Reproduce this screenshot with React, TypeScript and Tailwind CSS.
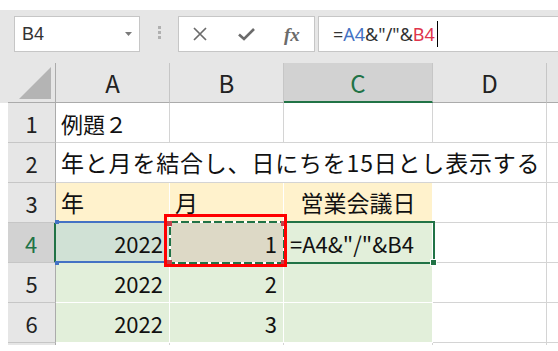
import React from "react";

const gray = "border-r border-b border-[#d4d4d4]";
const wht = "border-r border-b border-white";

function RowHead({ n, sel }: { n?: number; sel?: boolean }) {
  return (
    <div
      className={
        "w-[48px] shrink-0 h-full flex items-center justify-center text-[22px] leading-none border-b border-b-[#c6c6c6] " +
        (sel
          ? "bg-[#d2d2d2] text-[#217346] border-r-2 border-r-[#217346]"
          : "bg-[#e6e6e6] text-[#222] border-r border-r-[#ababab]")
      }
    >
      {n !== undefined && <span className="pt-[1px]">{n}</span>}
    </div>
  );
}

function Row({ children }: { children: React.ReactNode }) {
  return (
    <div className="flex h-[40px]">
      <div className="w-[8px] shrink-0 bg-white" />
      {children}
    </div>
  );
}

export default function App() {
  return (
    <div className="w-[558px] h-[351px] bg-white overflow-hidden font-['Noto_Sans_CJK_JP','Noto_Sans',sans-serif] text-[#111]">
      <div className="h-[10px]" />
      {/* formula bar */}
      <div className="h-[53px] bg-[#e6e6e6] flex items-start pt-[6px]">
        <div className="ml-[14px] w-[126px] h-[36px] shrink-0 bg-white border border-[#c6c6c6] flex items-center justify-between pl-[7px] pr-[7px]">
          <span className="font-['Liberation_Sans',sans-serif] text-[18px] text-[#333] leading-none">B4</span>
          <svg width="7" height="4" viewBox="0 0 7 4">
            <path d="M0 0 L7 0 L3.5 4 Z" fill="#7a7a7a" />
          </svg>
        </div>
        <div className="w-[38px] shrink-0 flex justify-center pt-[10px]">
          <div className="flex flex-col gap-[2px]">
            <div className="w-[3px] h-[3px] bg-[#b0b0b0]" />
            <div className="w-[3px] h-[3px] bg-[#b0b0b0]" />
            <div className="w-[3px] h-[3px] bg-[#b0b0b0]" />
          </div>
        </div>
        <div className="w-[137px] h-[36px] shrink-0 bg-white border border-[#c6c6c6] flex items-center pl-[14px]">
          <svg width="14" height="14" viewBox="0 0 14 14">
            <path d="M1 1 L13 13 M13 1 L1 13" stroke="#6b6b6b" strokeWidth="1.7" />
          </svg>
          <svg className="ml-[31px]" width="17" height="14" viewBox="0 0 17 14">
            <path d="M1 7.5 L6 12 L16 2" stroke="#6b6b6b" strokeWidth="2.6" fill="none" />
          </svg>
          <span className="ml-[29px] font-['Liberation_Serif',serif] italic font-bold text-[19px] leading-none text-[#6b6b6b]">
            fx
          </span>
        </div>
        <div className="ml-[3px] flex-1 h-[36px] bg-white border border-[#c6c6c6] border-r-0 flex items-center pl-[14px]">
          <span className="font-['Noto_Sans',sans-serif] text-[18px] leading-none text-[#333]">
            =<span className="text-[#4472c4]">A4</span>&amp;"/"&amp;<span className="text-[#e0344c]">B4</span>
          </span>
          <div className="ml-[2px] w-[1px] h-[26px] bg-black" />
        </div>
      </div>

      {/* sheet */}
      <div className="relative h-[282px] overflow-hidden">
        {/* column headers */}
        <div className="flex h-[40px] bg-[#e6e6e6] text-[24px] leading-none text-[#222]">
          <div className="w-[8px] shrink-0" />
          <div className="w-[48px] shrink-0 border-r border-b border-[#ababab] flex items-end justify-end pr-[4px] pb-[3px]">
            <svg width="32" height="32" viewBox="0 0 32 32">
              <path d="M32 0 L32 32 L0 32 Z" fill="#b4b4b4" />
            </svg>
          </div>
          <div className="w-[114px] shrink-0 border-r border-r-[#c6c6c6] border-b border-b-[#ababab] flex items-center justify-center">A</div>
          <div className="w-[114px] shrink-0 border-r border-r-[#c6c6c6] border-b border-b-[#ababab] flex items-center justify-center">B</div>
          <div className="w-[149px] shrink-0 bg-[#d2d2d2] text-[#217346] border-r border-r-[#c6c6c6] border-b-2 border-b-[#217346] flex items-center justify-center pt-[1px]">C</div>
          <div className="w-[114px] shrink-0 border-r border-r-[#c6c6c6] border-b border-b-[#ababab] flex items-center justify-center">D</div>
          <div className="flex-1 border-b border-b-[#ababab]" />
        </div>

        {/* row 1 */}
        <Row>
          <RowHead n={1} />
          <div className={"w-[114px] shrink-0 flex items-center pl-[5px] text-[22px] leading-none " + gray}>例題２</div>
          <div className={"w-[114px] shrink-0 " + gray} />
          <div className={"w-[149px] shrink-0 " + gray} />
          <div className={"w-[114px] shrink-0 " + gray} />
          <div className="flex-1 border-b border-[#d4d4d4]" />
        </Row>
        {/* row 2 */}
        <Row>
          <RowHead n={2} />
          <div className={"w-[491px] shrink-0 flex items-center pl-[5px] text-[23px] leading-none tracking-[0.8px] whitespace-nowrap " + gray}>
            年と月を結合し、日にちを15日とし表示する
          </div>
          <div className="flex-1 border-b border-[#d4d4d4]" />
        </Row>
        {/* row 3 */}
        <Row>
          <RowHead n={3} />
          <div className={"w-[114px] shrink-0 bg-[#fff2cc] flex items-center pl-[5px] text-[23px] leading-none " + wht}>年</div>
          <div className={"w-[114px] shrink-0 bg-[#fff2cc] flex items-center pl-[5px] text-[23px] leading-none " + wht}>月</div>
          <div className={"w-[149px] shrink-0 bg-[#fff2cc] flex items-center justify-center text-[23px] leading-none " + wht}>営業会議日</div>
          <div className={"w-[114px] shrink-0 " + gray} />
          <div className="flex-1 border-b border-[#d4d4d4]" />
        </Row>
        {/* row 4 */}
        <Row>
          <RowHead n={4} sel />
          <div className={"w-[114px] shrink-0 bg-[#d0e1d5] flex items-center justify-end pr-[6px] text-[22px] leading-none " + wht}>2022</div>
          <div className={"w-[114px] shrink-0 bg-[#ddd9c6] flex items-center justify-end pr-[6px] text-[22px] leading-none " + wht}>1</div>
          <div className={"w-[149px] shrink-0 bg-[#e2efda] flex items-center pl-[6px] text-[22px] leading-none whitespace-nowrap " + wht}>
            =A4&amp;"/"&amp;B4
          </div>
          <div className={"w-[114px] shrink-0 " + gray} />
          <div className="flex-1 border-b border-[#d4d4d4]" />
        </Row>
        {/* row 5 */}
        <Row>
          <RowHead n={5} />
          <div className={"w-[114px] shrink-0 bg-[#e2efda] flex items-center justify-end pr-[6px] text-[22px] leading-none " + wht}>2022</div>
          <div className={"w-[114px] shrink-0 bg-[#e2efda] flex items-center justify-end pr-[6px] text-[22px] leading-none " + wht}>2</div>
          <div className={"w-[149px] shrink-0 bg-[#e2efda] " + wht} />
          <div className={"w-[114px] shrink-0 " + gray} />
          <div className="flex-1 border-b border-[#d4d4d4]" />
        </Row>
        {/* row 6 */}
        <Row>
          <RowHead n={6} />
          <div className={"w-[114px] shrink-0 bg-[#e2efda] flex items-center justify-end pr-[6px] text-[22px] leading-none " + wht}>2022</div>
          <div className={"w-[114px] shrink-0 bg-[#e2efda] flex items-center justify-end pr-[6px] text-[22px] leading-none " + wht}>3</div>
          <div className={"w-[149px] shrink-0 bg-[#e2efda] " + wht} />
          <div className={"w-[114px] shrink-0 " + gray} />
          <div className="flex-1 border-b border-[#d4d4d4]" />
        </Row>
        {/* row 7 sliver */}
        <Row>
          <RowHead />
          <div className={"w-[114px] shrink-0 " + gray} />
          <div className={"w-[114px] shrink-0 " + gray} />
          <div className={"w-[149px] shrink-0 " + gray} />
          <div className={"w-[114px] shrink-0 " + gray} />
          <div className="flex-1" />
        </Row>

        {/* overlays */}
        <div className="absolute left-[57px] top-[158px] w-[112px] h-[42px] border-t-2 border-b-2 border-[#4472c4]" />
        <div className="absolute left-[55px] top-[157px] w-[4px] h-[4px] bg-[#4472c4]" />
        <div className="absolute left-[55px] top-[198px] w-[4px] h-[4px] bg-[#4472c4]" />
        <svg className="absolute left-[169px] top-[158px]" width="116" height="43" viewBox="0 0 116 43">
          <rect x="1" y="1" width="114" height="41" fill="none" stroke="#ffffff" strokeWidth="2" />
          <rect x="1" y="1" width="114" height="41" fill="none" stroke="#217346" strokeWidth="2" strokeDasharray="8 3" />
        </svg>
        <div className="absolute left-[167px] top-[158px] w-[5px] h-[5px] bg-[#c4404a]" />
        <div className="absolute left-[281px] top-[158px] w-[5px] h-[5px] bg-[#c4404a]" />
        <div className="absolute left-[167px] top-[197px] w-[5px] h-[5px] bg-[#c4404a]" />
        <div className="absolute left-[281px] top-[197px] w-[5px] h-[5px] bg-[#c4404a]" />
        <div className="absolute left-[285px] top-[158px] w-[150px] h-[43px] border-2 border-[#217346]" />
        <div className="absolute left-[430px] top-[196px] w-[7px] h-[7px] bg-[#217346] border border-white" />
        <div className="absolute left-[164px] top-[151px] w-[123px] h-[53px] border-[3px] border-[#ff0000]" />
      </div>
    </div>
  );
}
